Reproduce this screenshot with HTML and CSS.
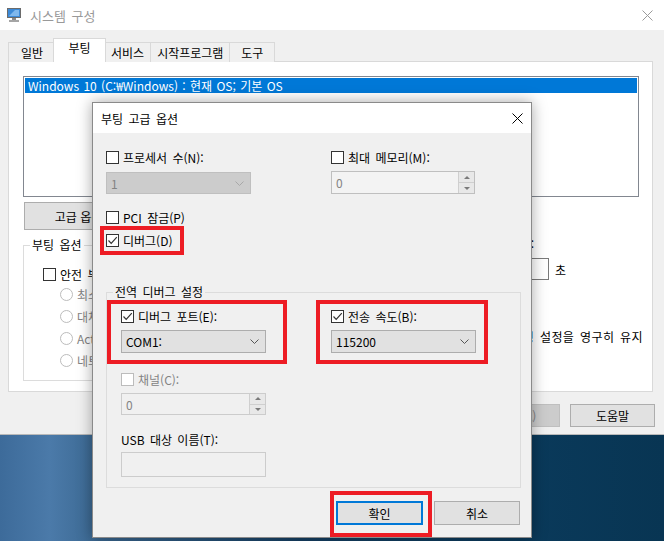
FILE: index.html
```html
<!DOCTYPE html>
<html lang="ko">
<head>
  <meta charset="UTF-8" />
  <meta name="viewport" content="width=device-width, initial-scale=1.0"/>
  <title>시스템 구성</title>
  <link rel="stylesheet" href="styles.css">
</head>
<body>
  <div class="window">
    <div class="titlebar">
      <div class="title">
        <svg class="app-icon" width="16" height="16" viewBox="0 0 16 16">
          <rect x="1.5" y="1.5" width="13" height="9" fill="#3c8ad8" stroke="#6b6b6b"/>
          <path d="M3 9 L9 3 L13 3 L13 9 Z" fill="#7fb8ee"/>
          <rect x="6" y="11" width="4" height="2" fill="#8a8a8a"/>
          <rect x="3" y="13" width="10" height="2" fill="#a5a5a5"/>
        </svg>
        <span>시스템 구성</span>
      </div>
      <svg class="win-close" width="11" height="11" viewBox="0 0 11 11">
        <path d="M0.5 0.5 L10.5 10.5 M10.5 0.5 L0.5 10.5" stroke="#9a9a9a" stroke-width="1"/>
      </svg>
    </div>

    <div class="tabs">
      <div class="tab tab-general">일반</div>
      <div class="tab active">부팅</div>
      <div class="tab">서비스</div>
      <div class="tab">시작프로그램</div>
      <div class="tab">도구</div>
    </div>

    <div class="panel">
      <div class="os-list">
        <div class="os-item selected">Windows 10 (C:₩Windows) : 현재 OS; 기본 OS</div>
      </div>
      <div class="panel-buttons">
        <button type="button" class="btn btn-wide">고급 옵션(V)...</button>
      </div>
      <div class="boot-row">
        <fieldset class="group boot-options">
          <legend>부팅 옵션</legend>
          <label class="chk"><span class="box"></span>안전 부팅(F)</label>
          <div class="radios">
            <label class="radio"><span class="circle"></span>최소(M)</label>
            <label class="radio"><span class="circle"></span>대체 셸(L)</label>
            <label class="radio"><span class="circle"></span>Active Directory 복구(P)</label>
            <label class="radio"><span class="circle"></span>네트워크(N)</label>
          </div>
        </fieldset>
        <div class="timeout">
          <div class="timeout-label">제한 시간(T):</div>
          <div class="timeout-row">
            <span class="textbox timeout-box">30</span>
            <span>초</span>
          </div>
          <label class="chk keep"><span class="box"></span>모든 부팅 설정을 영구히 유지</label>
        </div>
      </div>
    </div>

    <div class="window-buttons">
      <button type="button" class="btn">확인</button>
      <button type="button" class="btn">취소</button>
      <button type="button" class="btn" disabled>적용(A)</button>
      <button type="button" class="btn">도움말</button>
    </div>
  </div>

  <div class="dialog">
    <div class="dialog-title">
      <span>부팅 고급 옵션</span>
      <svg class="dialog-close" width="11" height="11" viewBox="0 0 11 11">
        <path d="M0.5 0.5 L10.5 10.5 M10.5 0.5 L0.5 10.5" stroke="#000" stroke-width="1"/>
      </svg>
    </div>
    <div class="dialog-body">
      <div class="cols">
        <div class="col">
          <label class="chk"><span class="box"></span>프로세서 수(N):</label>
          <div class="select disabled"><span>1</span>
            <svg class="chevron" width="9" height="5" viewBox="0 0 9 5"><path d="M0.5 0.5 L4.5 4.5 L8.5 0.5" fill="none" stroke="currentColor"/></svg>
          </div>
        </div>
        <div class="col">
          <label class="chk"><span class="box"></span>최대 메모리(M):</label>
          <div class="spin disabled">
            <span class="spin-value">0</span>
            <span class="spin-btns"><span class="spin-up"></span><span class="spin-down"></span></span>
          </div>
        </div>
      </div>

      <label class="chk pci"><span class="box"></span>PCI 잠금(P)</label>
      <label class="chk debug"><span class="box">
        <svg width="11" height="11" viewBox="0 0 11 11"><path d="M1.5 5.5 L4.2 8.3 L9.8 2.2" fill="none" stroke="#333" stroke-width="1.2"/></svg>
      </span>디버그(D)</label>

      <fieldset class="group debug-group">
        <legend>전역 디버그 설정</legend>
        <div class="cols cols-debug">
          <div class="col">
            <label class="chk"><span class="box">
              <svg width="11" height="11" viewBox="0 0 11 11"><path d="M1.5 5.5 L4.2 8.3 L9.8 2.2" fill="none" stroke="#333" stroke-width="1.2"/></svg>
            </span>디버그 포트(E):</label>
            <div class="select"><span>COM1:</span>
              <svg class="chevron" width="9" height="5" viewBox="0 0 9 5"><path d="M0.5 0.5 L4.5 4.5 L8.5 0.5" fill="none" stroke="currentColor"/></svg>
            </div>
          </div>
          <div class="col">
            <label class="chk"><span class="box">
              <svg width="11" height="11" viewBox="0 0 11 11"><path d="M1.5 5.5 L4.2 8.3 L9.8 2.2" fill="none" stroke="#333" stroke-width="1.2"/></svg>
            </span>전송 속도(B):</label>
            <div class="select"><span>115200</span>
              <svg class="chevron" width="9" height="5" viewBox="0 0 9 5"><path d="M0.5 0.5 L4.5 4.5 L8.5 0.5" fill="none" stroke="currentColor"/></svg>
            </div>
          </div>
        </div>
        <label class="chk disabled channel"><span class="box"></span>채널(C):</label>
        <div class="spin disabled channel-spin">
          <span class="spin-value">0</span>
          <span class="spin-btns"><span class="spin-up"></span><span class="spin-down"></span></span>
        </div>
        <div class="field-label">USB 대상 이름(T):</div>
        <div class="textbox disabled usb-box"></div>
      </fieldset>

      <div class="dialog-buttons">
        <button type="button" class="btn btn-default">확인</button>
        <button type="button" class="btn btn-cancel">취소</button>
      </div>
    </div>
  </div>

  <!-- red highlight marks -->
  <div class="mark mark-debug"></div>
  <div class="mark mark-port"></div>
  <div class="mark mark-baud"></div>
  <div class="mark mark-ok"></div>
</body>
</html>
```

FILE: styles.css
```css
* {
  box-sizing: border-box;
}
html, body {
  margin: 0;
  padding: 0;
}
body {
  position: relative;
  width: 664px;
  height: 541px;
  overflow: hidden;
  font-family: "Noto Sans CJK KR", "Noto Sans", sans-serif;
  font-size: 12px;
  line-height: 15px;
  word-spacing: 2px;
  color: #000;
  background: linear-gradient(90deg, #3d6b9a 0, #4b7aa9 50px, #3a6790 100px, #153f63 300px, #0a3a5b 520px, #083553 100%);
}
button {
  font: inherit;
  color: inherit;
  padding: 0;
}

/* main window */
.window {
  position: absolute;
  left: 0;
  top: 0;
  width: 664px;
  height: 435px;
  background: #f0f0f0;
  border-bottom: 1px solid #b9b9b9;
}
.titlebar {
  height: 30px;
  background: #fff;
  display: flex;
  align-items: center;
  justify-content: space-between;
  padding: 0 11px 0 6px;
}
.title {
  display: flex;
  align-items: center;
  gap: 8px;
  color: #999;
  font-size: 13px;
}
.win-close {
  display: block;
}

.tabs {
  display: flex;
  align-items: flex-end;
  height: 24px;
  margin-top: 8px;
  margin-bottom: -1px;
  padding-left: 8px;
  position: relative;
  z-index: 1;
}
.tab {
  height: 20px;
  min-width: 46px;
  padding: 2px 6px 0;
  text-align: center;
  background: #f0f0f0;
  border: 1px solid #d9d9d9;
  border-bottom: none;
  margin-right: -1px;
}
.tab.tab-general {
  min-width: 48px;
}
.tab.active {
  height: 24px;
  min-width: 53px;
  padding-top: 1px;
  margin: 0 -2px 0 -2px;
  background: #fff;
  position: relative;
  z-index: 1;
}

.panel {
  margin: 0 11px 0 8px;
  height: 331px;
  background: #fff;
  border: 1px solid #d9d9d9;
  padding: 14px 13px 0 14px;
}
.os-list {
  width: 616px;
  height: 121px;
  border: 1px solid #828790;
  padding: 1px;
}
.os-item {
  height: 15px;
  padding-left: 3px;
  white-space: nowrap;
  word-spacing: 1px;
}
.os-item.selected {
  background: #0078d7;
  color: #fff;
}
.panel-buttons {
  margin-top: 5px;
  display: flex;
}
.btn {
  height: 23px;
  width: 85px;
  background: #e1e1e1;
  border: 1px solid #adadad;
  text-align: center;
}
.btn:disabled {
  background: #cccccc;
  border-color: #bfbfbf;
  color: #838383;
}
.btn-wide {
  width: 134px;
  height: 28px;
  margin-left: 1px;
}

.boot-row {
  display: flex;
  align-items: flex-start;
  margin-top: 8px;
}
.group {
  margin: 0;
  border: 1px solid #dcdcdc;
}
.group legend {
  padding: 0 2px;
  line-height: 14px;
}
.boot-options {
  width: 400px;
  padding: 15px 0 12px 19px;
}
.boot-options legend {
  margin-left: -13px;
}
.radios {
  padding-left: 17px;
  margin-top: 4px;
  display: flex;
  flex-direction: column;
  gap: 6px;
  color: #838383;
}
.radio {
  display: flex;
  align-items: center;
  gap: 4px;
  height: 16px;
  white-space: nowrap;
}
.circle {
  width: 13px;
  height: 13px;
  border: 1px solid #bcbcbc;
  border-radius: 50%;
  background: #fff;
  flex: none;
}

.timeout {
  margin-left: auto;
  margin-top: -2px;
  width: 200px;
  display: flex;
  flex-direction: column;
  align-items: flex-start;
}
.timeout-label {
  margin-left: 27px;
}
.timeout-row {
  display: flex;
  align-items: center;
  gap: 6px;
  margin-top: 7px;
  margin-left: 61px;
}
.textbox {
  display: block;
  background: #fff;
  border: 1px solid #7a7a7a;
  padding-left: 4px;
}
.timeout-box {
  width: 49px;
  height: 22px;
  line-height: 20px;
}
.keep {
  margin-top: 49px;
  align-self: flex-end;
  margin-right: -4px;
  letter-spacing: 0.4px;
}

.window-buttons {
  display: flex;
  justify-content: flex-end;
  gap: 10px;
  margin-top: 12px;
  padding-right: 9px;
}

/* checkboxes */
.chk {
  display: flex;
  align-items: center;
  gap: 4px;
  height: 15px;
  white-space: nowrap;
}
.box {
  width: 13px;
  height: 13px;
  flex: none;
  border: 1px solid #333;
  background: #fff;
  display: flex;
  align-items: center;
  justify-content: center;
}
.box svg {
  display: block;
}
.chk.disabled {
  color: #838383;
}
.chk.disabled .box {
  border-color: #bcbcbc;
}

/* dialog */
.dialog {
  position: absolute;
  left: 92px;
  top: 102px;
  width: 440px;
  height: 436px;
  background: #f0f0f0;
  border: 1px solid #8a8a8a;
  box-shadow: 0 0 14px rgba(0, 0, 0, 0.35);
}
.dialog-title {
  height: 30px;
  background: #fff;
  display: flex;
  align-items: center;
  justify-content: space-between;
  padding: 0 8px 0 8px;
}
.dialog-close {
  display: block;
}
.dialog-body {
  padding: 17px 10px 0 13px;
}
.cols {
  display: grid;
  grid-template-columns: 225px 145px;
}
.cols-debug {
  grid-template-columns: 210px 145px;
}
.select {
  margin-top: 7px;
  width: 145px;
  height: 23px;
  display: flex;
  align-items: center;
  justify-content: space-between;
  padding: 0 6px 0 4px;
  background: #e1e1e1;
  border: 1px solid #adadad;
  color: #000;
}
.select .chevron {
  color: #555;
  display: block;
}
.select.disabled {
  height: 22px;
  background: #cccccc;
  border-color: #bfbfbf;
  color: #838383;
}
.select.disabled .chevron {
  color: #a8a8a8;
}
.spin {
  margin-top: 6px;
  width: 144px;
  height: 23px;
  display: flex;
  background: #f3f3f3;
  border: 1px solid #bfbfbf;
  color: #838383;
}
.spin-value {
  flex: 1;
  padding-left: 4px;
  line-height: 21px;
}
.spin-btns {
  width: 16px;
  display: flex;
  flex-direction: column;
  border-left: 1px solid #cfcfcf;
}
.spin-up,
.spin-down {
  flex: 1;
  display: flex;
  align-items: center;
  justify-content: center;
  background: #e8e8e8;
}
.spin-up {
  border-bottom: 1px solid #cfcfcf;
}
.spin-up::after,
.spin-down::after {
  content: "";
  border-left: 3px solid transparent;
  border-right: 3px solid transparent;
}
.spin-up::after {
  border-bottom: 3px solid #7a7a7a;
}
.spin-down::after {
  border-top: 3px solid #7a7a7a;
}

.pci {
  margin-top: 16px;
}
.debug {
  margin-top: 8px;
}
.debug-group {
  width: 415px;
  margin-top: 37px;
  padding: 10px 0 10px 14px;
}
.debug-group legend {
  margin-left: -8px;
}
.debug-group .select {
  margin-top: 6px;
}
.channel {
  margin-top: 19px;
}
.channel-spin {
  width: 145px;
  height: 22px;
  background: #f0f0f0;
  border-color: #cccccc;
}
.field-label {
  margin-top: 17px;
}
.usb-box {
  margin-top: 5px;
  width: 145px;
  height: 25px;
  background: #f0f0f0;
  border-color: #cccccc;
}
.dialog-buttons {
  display: flex;
  justify-content: flex-end;
  gap: 11px;
  margin-top: 13px;
  padding-right: 1px;
}
.dialog-buttons .btn {
  height: 24px;
}
.btn-default {
  width: 87px;
  border: 2px solid #0078d7;
}
.btn-cancel {
  width: 86px;
}

/* red highlight marks */
.mark {
  position: absolute;
  border: 4px solid #ed1c24;
}
.mark-debug {
  left: 100px;
  top: 226px;
  width: 84px;
  height: 29px;
}
.mark-port {
  left: 107px;
  top: 300px;
  width: 180px;
  height: 64px;
}
.mark-baud {
  left: 316px;
  top: 300px;
  width: 172px;
  height: 64px;
}
.mark-ok {
  left: 330px;
  top: 491px;
  width: 102px;
  height: 46px;
}
```
